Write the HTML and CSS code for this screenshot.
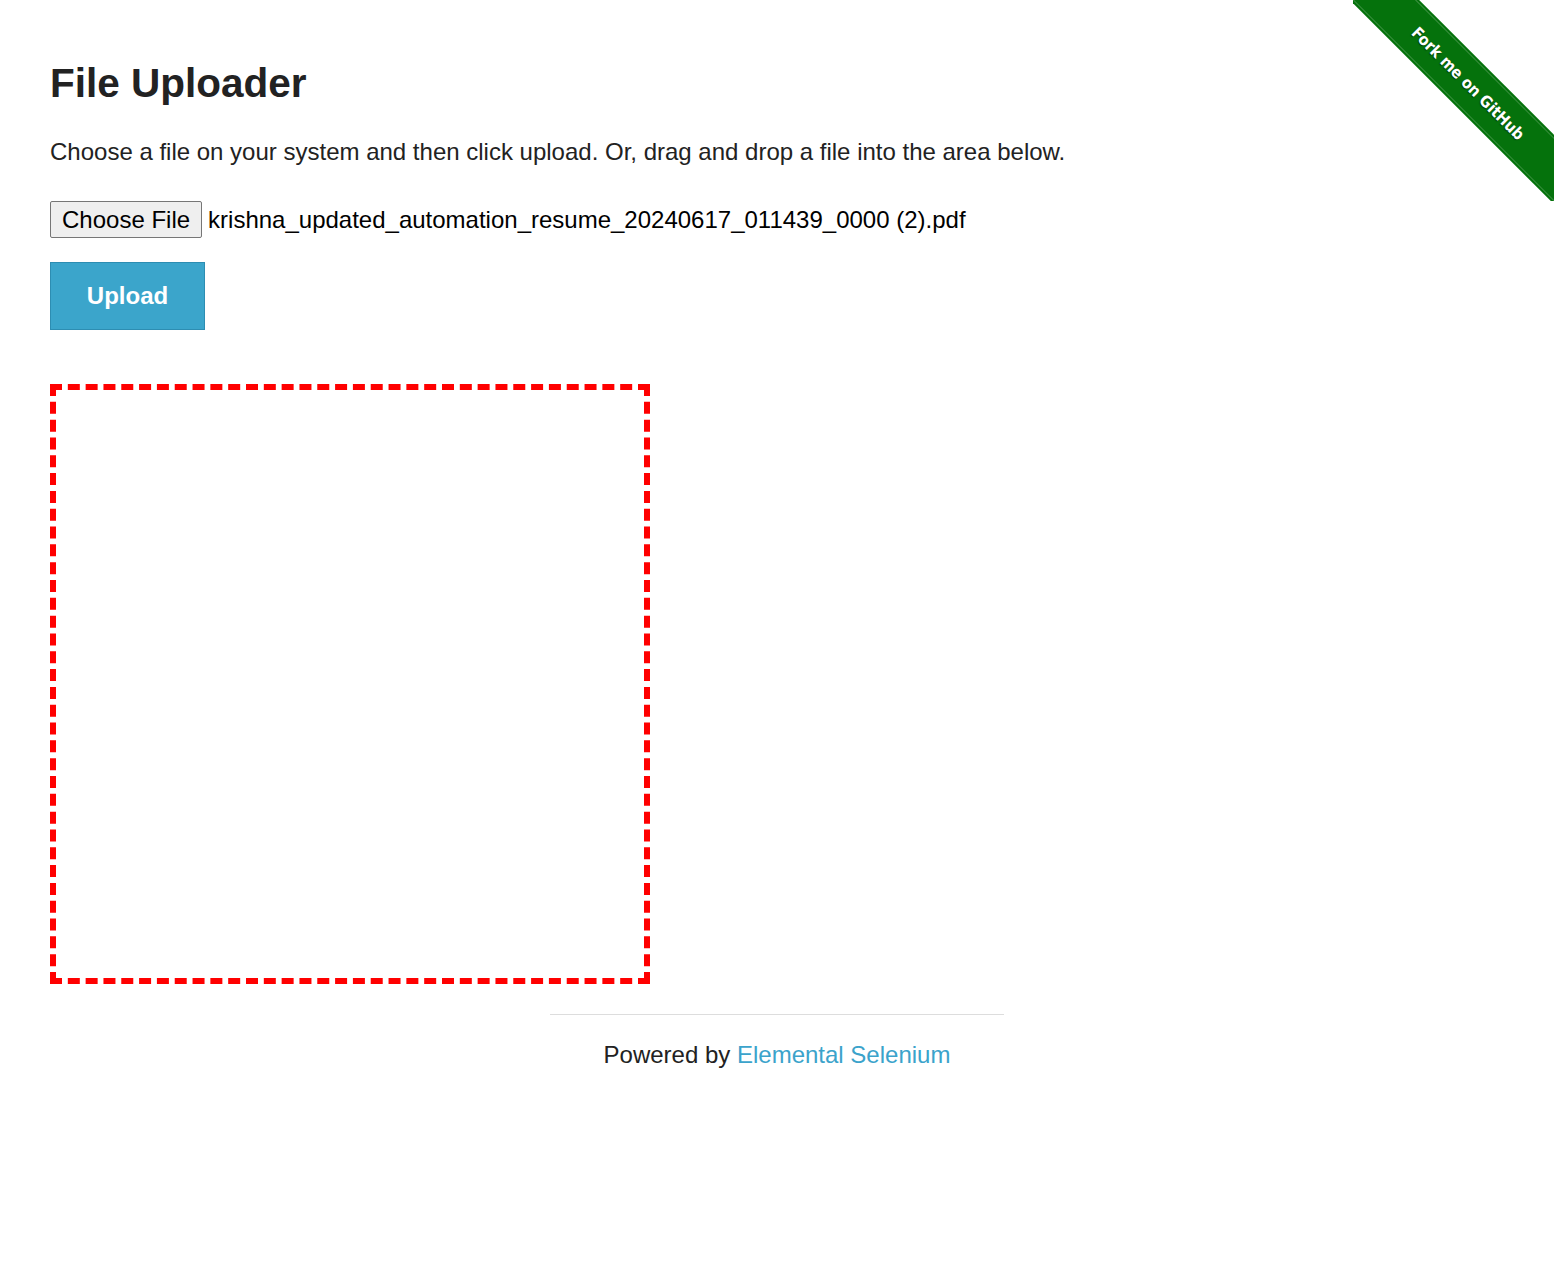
FILE: index.html
```html
<!DOCTYPE html>
<html lang="en">
<head>
<meta charset="utf-8">
<title>The Internet</title>
<link rel="stylesheet" href="styles.css">
</head>
<body>
<a class="ribbon-wrap" href="#"><span class="ribbon">Fork me on GitHub</span></a>
<div class="page">
  <h3 class="title">File Uploader</h3>
  <p class="lead">Choose a file on your system and then click upload. Or, drag and drop a file into the area below.</p>
  <div class="file-row">
    <button class="choose" type="button">Choose File</button>
    <span class="filename">krishna_updated_automation_resume_20240617_011439_0000 (2).pdf</span>
  </div>
  <button class="upload" type="button">Upload</button>
  <div class="dropzone"></div>
</div>
<footer class="footer">
  <hr class="rule">
  <div class="powered">Powered by <a href="#" class="link">Elemental Selenium</a></div>
</footer>
</body>
</html>
```
FILE: styles.css
```css
html, body {
  margin: 0;
  padding: 0;
  background: #fff;
}
body {
  font-family: "Liberation Sans", Arial, sans-serif;
  color: #222;
  position: relative;
  min-height: 1280px;
}
.page {
  padding: 59px 50px 0;
}
.title {
  font-size: 40.5px;
  line-height: 48px;
  font-weight: bold;
  margin: 0;
  color: #222;
}
.lead {
  font-size: 24px;
  line-height: 30px;
  margin: 30px 0 0;
}
.file-row {
  display: flex;
  align-items: center;
  margin-top: 34px;
  height: 37px;
}
.choose {
  font-family: "Liberation Sans", Arial, sans-serif;
  font-size: 24px;
  height: 37px;
  padding: 0 11px;
  background: #efefef;
  border: 1px solid #767676;
  border-radius: 2px;
  color: #000;
  margin: 0;
}
.filename {
  font-size: 24px;
  margin-left: 6px;
  color: #000;
}
.upload {
  display: block;
  margin-top: 24px;
  width: 155px;
  height: 68px;
  background: #3ba5cb;
  border: 1px solid #2d8db2;
  color: #fff;
  font-family: "Liberation Sans", Arial, sans-serif;
  font-weight: bold;
  font-size: 24px;
  padding: 0;
}
.dropzone {
  margin-top: 54px;
  width: 600px;
  height: 600px;
  box-sizing: border-box;
  border: 6px dashed #ff0000;
}
.footer {
  width: 454px;
  margin: 30px auto 0;
}
.rule {
  border: 0;
  border-top: 1px solid #ddd;
  margin: 0;
}
.powered {
  text-align: center;
  font-size: 24px;
  margin-top: 26px;
  line-height: 28px;
}
.link {
  color: #3ba3cb;
  text-decoration: none;
}
.ribbon-wrap {
  position: absolute;
  top: 0;
  right: 0;
  width: 201px;
  height: 201px;
  overflow: hidden;
  text-decoration: none;
}
.ribbon {
  position: absolute;
  left: -35px;
  top: 61px;
  width: 300px;
  height: 45px;
  box-sizing: border-box;
  transform: rotate(45deg);
  background: #05720c;
  border-top: 1px solid rgba(255,255,255,0.22);
  border-bottom: 1px solid rgba(255,255,255,0.22);
  box-shadow: 0 0 0 2px #05720c;
  color: #fff;
  font-family: "DejaVu Sans Condensed", "DejaVu Sans", sans-serif;
  font-weight: bold;
  font-size: 16px;
  line-height: 43px;
  text-align: center;
  text-shadow: 0 1px 1px rgba(0,0,0,0.5);
}
```
